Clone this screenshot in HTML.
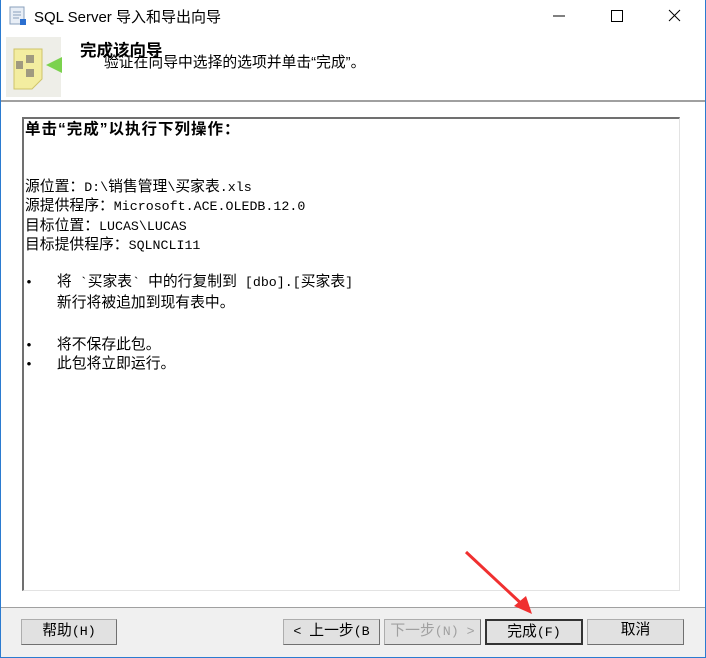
<!DOCTYPE html>
<html><head><meta charset="utf-8"><style>
*{margin:0;padding:0;box-sizing:border-box}
body{width:706px;height:658px;overflow:hidden;background:#fff;position:relative;font-family:"Liberation Mono","Noto Sans CJK SC",monospace;}
.win{position:absolute;left:0;top:0;width:706px;height:658px;border:1px solid #2b7bd0;border-top:none;}
.title{position:absolute;left:34px;top:6px;font:15px "Liberation Sans","Noto Sans CJK SC",sans-serif;color:#000}
.hdr1{position:absolute;left:80px;top:37px;font:bold 16.5px "Liberation Sans","Noto Sans CJK SC",sans-serif}
.hdr2{position:absolute;left:104px;top:51px;font:14.8px "Liberation Sans","Noto Sans CJK SC",sans-serif}
.sep{position:absolute;left:1px;right:1px;top:100px;height:2px;background:#a0a0a0}
.box{position:absolute;left:22px;top:117px;width:658px;height:474px;background:#fff;border-top:2px solid #707070;border-left:2px solid #707070;border-right:1px solid #e3e3e3;border-bottom:1px solid #e3e3e3}
.box div{position:absolute;left:1px;font-size:14.8px;line-height:16px;white-space:pre;color:#000}
.box span,.btn span{font-size:13.3px}
.bottom{position:absolute;left:1px;right:1px;top:607px;bottom:1px;background:#f0f0f0;border-top:1px solid #a0a0a0}
.btn{position:absolute;top:619px;height:26px;background:#e1e1e1;border:1px solid #adadad;border-right-color:#707070;border-bottom-color:#707070;font-size:14.8px;text-align:center;line-height:23px;color:#000}
</style></head><body>
<div class="win"></div>
<svg style="position:absolute;left:8px;top:6px" width="20" height="20"><rect x="2" y="1" width="14" height="17" fill="#e8eef6" stroke="#8aa0bc"/><path d="M5 6h8M5 9h8M5 12h6" stroke="#8aa0bc"/><rect x="12" y="13" width="6" height="6" fill="#2b6fd0"/></svg>
<div class="title">SQL Server 导入和导出向导</div>
<svg style="position:absolute;left:550px;top:8px" width="140" height="18"><path d="M3 8h12" stroke="#000"/><rect x="61.5" y="2.5" width="11" height="11" fill="none" stroke="#000"/><path d="M119 2l11 11M130 2l-11 11" stroke="#000"/></svg>
<div style="position:absolute;left:6px;top:37px;width:55px;height:60px;background:#eeeee8"></div>
<svg style="position:absolute;left:6px;top:37px" width="60" height="60"><path d="M8 12h28v30l-10 10H8z" fill="#f3eda0" stroke="#cfc46a"/><rect x="20" y="18" width="8" height="8" fill="#a09a80"/><rect x="20" y="32" width="8" height="8" fill="#a09a80"/><rect x="10" y="24" width="7" height="8" fill="#a09a80"/><path d="M40 28l16-8v16z" fill="#7bd24e"/></svg>
<div class="hdr1">完成该向导</div>
<div class="hdr2">验证在向导中选择的选项并单击“完成”。</div>
<div class="sep"></div>
<div class="box">
<div style="top:3px;font-weight:bold;font-family:'Liberation Sans','Noto Sans CJK SC',sans-serif;font-size:15.5px;letter-spacing:1px">单击“完成”以执行下列操作：</div>
<div style="top:61px">源位置：<span>D:\</span>销售管理<span>\</span>买家表<span>.xls</span></div>
<div style="top:80px">源提供程序：<span>Microsoft.ACE.OLEDB.12.0</span></div>
<div style="top:100px">目标位置：<span>LUCAS\LUCAS</span></div>
<div style="top:119px">目标提供程序：<span>SQLNCLI11</span></div>
<div style="top:156px"><span>•   </span>将<span> `</span>买家表<span>` </span>中的行复制到<span> [dbo].[</span>买家表<span>]</span></div>
<div style="top:177px"><span>    </span>新行将被追加到现有表中。</div>
<div style="top:219px"><span>•   </span>将不保存此包。</div>
<div style="top:238px"><span>•   </span>此包将立即运行。</div>
</div>
<div class="bottom"></div>
<div class="btn" style="left:21px;width:96px">帮助<span>(H)</span></div>
<div class="btn" style="left:283px;width:97px"><span>&lt; </span>上一步<span>(B</span></div>
<div class="btn" style="left:384px;width:97px;color:#a0a0a0">下一步<span>(N) &gt;</span></div>
<div class="btn" style="left:485px;width:98px;border:2px solid #333">完成<span>(F)</span></div>
<div class="btn" style="left:587px;width:97px">取消</div>
<svg style="position:absolute;left:460px;top:548px" width="80" height="70"><path d="M6 4L66 60" stroke="#f03030" stroke-width="3"/><path d="M72 66L54 58L66 48z" fill="#f03030"/></svg>
</body></html>
